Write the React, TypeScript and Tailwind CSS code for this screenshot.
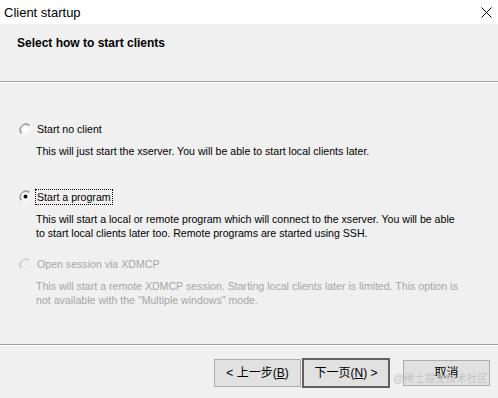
const sans = "font-['Liberation_Sans',Arial,sans-serif]";
const cjk = "font-['Liberation_Sans','Noto_Sans_CJK_SC',sans-serif]";

function Radio({ checked, disabled }: { checked?: boolean; disabled?: boolean }) {
  const dark = disabled ? "#b5b5b5" : "#6d6d6d";
  return (
    <svg width="13" height="13" viewBox="0 0 13 13" className="shrink-0" aria-hidden>
      <circle cx="6.5" cy="6.5" r="6" fill={disabled ? "#f0f0f0" : "#ffffff"} />
      <path d="M10.7 2.3 A6 6 0 0 0 2.3 10.7" fill="none" stroke={dark} strokeWidth="1" />
      <path d="M9.9 3.1 A4.8 4.8 0 0 0 3.1 9.9" fill="none" stroke={disabled ? "#d8d8d8" : "#a0a0a0"} strokeWidth="1" />
      <path d="M2.3 10.7 A6 6 0 0 0 10.7 2.3" fill="none" stroke="#ffffff" strokeWidth="1" />
      <path d="M3.1 9.9 A4.8 4.8 0 0 0 9.9 3.1" fill="none" stroke="#e3e3e3" strokeWidth="1" />
      {checked && <circle cx="6.5" cy="6.5" r="2" fill="#000" />}
    </svg>
  );
}

const options = [
  {
    label: "Start no client",
    desc: ["This will just start the xserver. You will be able to start local clients later."],
  },
  {
    label: "Start a program",
    checked: true,
    desc: [
      "This will start a local or remote program which will connect to the xserver. You will be able",
      "to start local clients later too. Remote programs are started using SSH.",
    ],
  },
  {
    label: "Open session via XDMCP",
    disabled: true,
    desc: [
      "This will start a remote XDMCP session. Starting local clients later is limited. This option is",
      "not available with the \"Multiple windows\" mode.",
    ],
  },
];

export default function App() {
  return (
    <div className={`relative flex h-[398px] w-[498px] flex-col overflow-hidden bg-[#f0f0f0] text-black ${sans}`}>
      <div className="flex h-[24px] items-center justify-between bg-white pl-[4px] pr-[6px]">
        <span className="text-[13px] leading-none">Client startup</span>
        <svg width="11" height="11" viewBox="0 0 11 11" aria-hidden>
          <path d="M0.5 0.5 L10.5 10.5 M10.5 0.5 L0.5 10.5" stroke="#000" strokeWidth="1" />
        </svg>
      </div>

      <div className="h-[58px] border-b border-[#a0a0a0] pl-[17px] pt-[12px]">
        <h1 className="text-[12px] font-bold leading-[14px]">Select how to start clients</h1>
      </div>
      <div className="h-px bg-white" />

      <div className="flex flex-col pt-[39px]">
        {options.map((o) => (
          <div key={o.label} className={`h-[67.5px] ${o.disabled ? "text-[#a6a6a6]" : ""}`}>
            <div className="flex items-center pl-[19px]">
              <Radio checked={o.checked} disabled={o.disabled} />
              <span
                className={`ml-[4px] px-[1px] text-[10.6px] leading-[14px] ${
                  o.checked ? "outline outline-1 outline-dotted outline-black" : ""
                }`}
              >
                {o.label}
              </span>
            </div>
            <div className="mt-[8px] pl-[36px] text-[10.6px] leading-[14px]">
              {o.desc.map((d) => (
                <div key={d} className="whitespace-nowrap">
                  {d}
                </div>
              ))}
            </div>
          </div>
        ))}
      </div>

      <div className="mt-auto border-b border-white">
        <div className="h-px bg-[#a0a0a0]" />
      </div>
      <div className={`flex h-[52px] items-center pr-[8px] pt-[2px] ${cjk}`}>
        <div className="ml-auto flex items-center">
          <button className="flex h-[28px] w-[87px] items-center justify-center border border-[#adadad] bg-[#e1e1e1] text-[12px]">
            &lt; 上一步(<span className="underline">B</span>)
          </button>
          <button className="ml-[1px] flex h-[30px] w-[88px] items-center justify-center border-2 border-[#616161] bg-[#e1e1e1] text-[12px]">
            下一页(<span className="underline">N</span>) &gt;
          </button>
          <button className="ml-[13px] flex h-[26px] w-[87px] items-center justify-center border border-[#adadad] bg-[#e1e1e1] text-[12px]">
            取消
          </button>
        </div>
      </div>
      <span
        className={`pointer-events-none absolute left-[393px] top-[373px] whitespace-nowrap text-[10.5px] leading-none text-[#c4c4c4] ${cjk}`}
      >
        @稀土掘金技术社区
      </span>
    </div>
  );
}
